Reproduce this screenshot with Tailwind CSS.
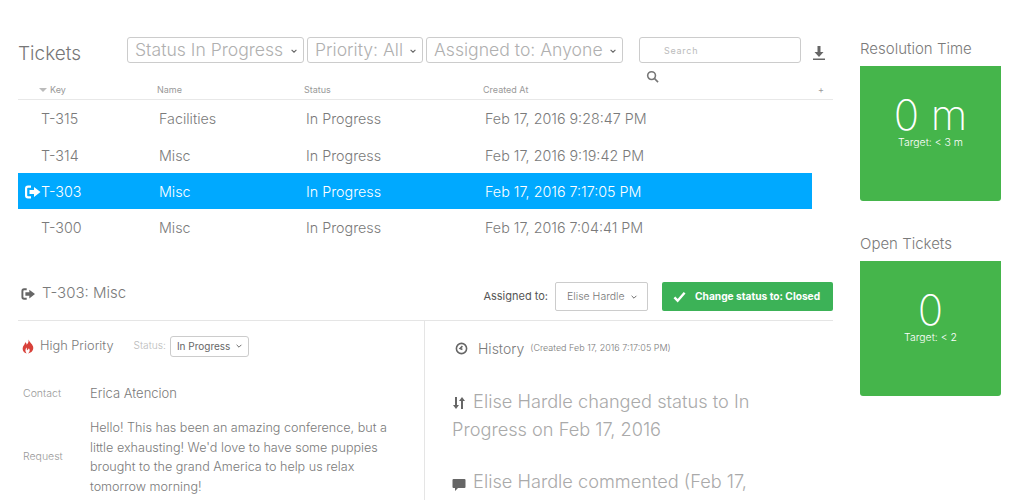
<!DOCTYPE html>
<html lang="en">
<head>
    <meta charset="UTF-8">
    <title>Tickets</title>
    <script src="https://cdn.jsdelivr.net/npm/@tailwindcss/browser@4"></script>
</head>
<body class="bg-white h-[500px] overflow-hidden font-['Inter',sans-serif] font-light text-[#7a7a7a]">
    <div class="flex items-start pl-[18px]">
        <!-- main column -->
        <div class="w-[815px] shrink-0">
            <div class="flex items-start h-[76px] pt-[37px]">
                <h1 class="w-[109px] text-[19px] leading-[32px] mt-[1px] font-light text-[#777]">Tickets</h1>
                <div class="flex gap-[3px]">
                    <div class="flex items-center justify-between w-[177px] h-[26px] pl-[7px] pr-[5px] pt-[1px] border border-[#ccc] rounded-[3px] text-[17.600px] text-[#b0b0b0] whitespace-nowrap">Status In Progress <svg class="w-[8px] h-[8px]" viewBox="0 0 10 10" fill="none" stroke="#666" stroke-width="1.400"><path d="M2 3.500l3 3 3-3"/></svg></div>
                    <div class="flex items-center justify-between w-[116px] h-[26px] pl-[7px] pr-[5px] pt-[1px] border border-[#ccc] rounded-[3px] text-[17.600px] text-[#b0b0b0] whitespace-nowrap">Priority: All <svg class="w-[8px] h-[8px]" viewBox="0 0 10 10" fill="none" stroke="#666" stroke-width="1.400"><path d="M2 3.500l3 3 3-3"/></svg></div>
                    <div class="flex items-center justify-between w-[197px] h-[26px] pl-[7px] pr-[5px] pt-[1px] border border-[#ccc] rounded-[3px] text-[17.600px] text-[#b0b0b0] whitespace-nowrap">Assigned to: Anyone <svg class="w-[8px] h-[8px]" viewBox="0 0 10 10" fill="none" stroke="#666" stroke-width="1.400"><path d="M2 3.500l3 3 3-3"/></svg></div>
                </div>
                <div class="relative ml-[16px] w-[162px] h-[26px] border border-[#ccc] rounded-[3px] pl-[24px] text-[9px] leading-[26px] tracking-[0.08em] font-normal text-[#bbb]">
                    Search
                    <svg class="absolute left-[6px] top-[32px] w-[13px] h-[13px]" viewBox="0 0 14 14" fill="none" stroke="#777" stroke-width="1.700"><circle cx="6" cy="6" r="4.200"/><path d="M9 9l4 4"/></svg>
                </div>
                <svg class="ml-[11px] mt-[8px] w-[14px] h-[16px]" viewBox="0 0 14 16" fill="#666"><path d="M5.500 1h3v6h3L7 12 2.500 7h3z"/><rect x="1" y="13.500" width="12" height="1.500"/></svg>
            </div>
            <div class="flex items-center h-[24px] pt-[5px] border-b border-[#e8e8e8] text-[9px] font-normal text-[#999]">
                <div class="w-[139px] pl-[21px] flex items-center gap-[3px]"><span class="w-0 h-0 border-x-[4px] border-x-transparent border-t-[4px] border-t-[#bbb]"></span><span>Key</span></div>
                <div class="w-[147px]">Name</div>
                <div class="w-[179px]">Status</div>
                <div class="w-[335px]">Created At</div>
                <div>+</div>
            </div>
            <div class="w-[794px] text-[14.300px]">
                <div class="flex items-center h-[37px]"><div class="w-[141px] pl-[23px]">T-315</div><div class="w-[147px]">Facilities</div><div class="w-[179px]">In Progress</div><div>Feb 17, 2016 9:28:47 PM</div></div>
                <div class="flex items-center h-[36px] pt-[1px]"><div class="w-[141px] pl-[23px]">T-314</div><div class="w-[147px]">Misc</div><div class="w-[179px]">In Progress</div><div>Feb 17, 2016 9:19:42 PM</div></div>
                <div class="flex items-center h-[36px] pt-[1px] bg-[#00a9ff] text-white"><div class="w-[141px] pl-[6px] flex items-center"><svg class="w-[17px] h-[14px]" viewBox="0 0 16 14" fill="white"><path d="M6.500 .5H3.500A3 3 0 0 0 .5 3.500v7a3 3 0 0 0 3 3h3v-2.200h-3a.8.8 0 0 1-.8-.8v-7a.8.8 0 0 1 .8-.8h3z"/><path d="M9.500 2L16 7l-6.500 5V9H5V5h4.500z"/></svg><span>T-303</span></div><div class="w-[147px]">Misc</div><div class="w-[179px]">In Progress</div><div>Feb 17, 2016 7:17:05 PM</div></div>
                <div class="flex items-center h-[37px]"><div class="w-[141px] pl-[23px]">T-300</div><div class="w-[147px]">Misc</div><div class="w-[179px]">In Progress</div><div>Feb 17, 2016 7:04:41 PM</div></div>
            </div>
            <!-- ticket detail -->
            <div class="flex items-center justify-between h-[66px] pt-[18px] border-b border-[#e5e5e5] mt-[9px]">
                <div class="flex items-center gap-[7px] pl-[3px] mb-[6px] text-[15px]">
                    <svg class="w-[14px] h-[14px]" viewBox="0 0 16 14" fill="#666"><path d="M6.500 .5H3.500A3 3 0 0 0 .5 3.500v7a3 3 0 0 0 3 3h3v-2.200h-3a.8.8 0 0 1-.8-.8v-7a.8.8 0 0 1 .8-.8h3z"/><path d="M9.500 2L16 7l-6.500 5V9H5V5h4.500z"/></svg>
                    <span>T-303: Misc</span>
                </div>
                <div class="flex items-center">
                    <span class="text-[11px] font-normal text-[#555]">Assigned to:</span>
                    <div class="flex items-center justify-between ml-[7px] w-[93px] h-[29px] pl-[11px] pr-[9px] border border-[#ccc] rounded-[2px] text-[10.500px] text-[#777] whitespace-nowrap">Elise Hardle <svg class="w-[8px] h-[8px]" viewBox="0 0 10 10" fill="none" stroke="#666" stroke-width="1.200"><path d="M2 3.500l3 3 3-3"/></svg></div>
                    <div class="flex items-center ml-[14px] w-[171px] h-[29px] pl-[11px] gap-[9px] rounded-[2px] bg-[#3cb257] text-white text-[10.200px] font-bold whitespace-nowrap"><svg class="w-[13px] h-[12px]" viewBox="0 0 14 12" fill="none" stroke="white" stroke-width="2.600"><path d="M1.500 6.500l3.500 3.500 7.500-8.500"/></svg>Change status to: Closed</div>
                </div>
            </div>
            <div class="flex">
                <div class="w-[407px] shrink-0 border-r border-[#e5e5e5] h-[200px]">
                    <div class="flex items-center h-[49px] pt-[1px] pl-[4px]">
                        <svg class="w-[12px] h-[15px]" viewBox="0 0 13 15" fill="#d8413a"><path d="M7 0c1 3 4 4.500 5 7.500 1 3.500-1.500 7-5.500 7.500 2-1.500 2.500-3.500 1-5.500-.5 1-1 1.500-2 2-.5-1 0-2-.5-3C3.500 10 3 12.500 5 15 2 14.500 .5 12 .7 9.500 1 6.500 3 6 3.500 3c1 .5 1.500 1.500 1.500 2.500C6.500 4.500 7.500 2.500 7 0z"/></svg>
                        <span class="ml-[6px] text-[12.800px]">High Priority</span>
                        <span class="ml-[20px] text-[10.200px] text-[#bbb]">Status:</span>
                        <div class="flex items-center justify-between ml-[4px] w-[79px] h-[21px] pl-[6px] pr-[5px] border border-[#ccc] rounded-[3px] text-[10px] font-normal text-[#666] whitespace-nowrap">In Progress <svg class="w-[8px] h-[8px]" viewBox="0 0 10 10" fill="none" stroke="#666" stroke-width="1.200"><path d="M2 3.500l3 3 3-3"/></svg></div>
                    </div>
                    <div class="flex items-center h-[24px] mt-[12px]"><div class="w-[72px] pl-[5px] text-[10.500px] text-[#999]">Contact</div><div class="text-[13px]">Erica Atencion</div></div>
                    <div class="flex items-center mt-[12px]"><div class="w-[72px] shrink-0 pl-[5px] text-[10.500px] text-[#999]">Request</div><div class="w-[310px] text-[12.600px] leading-[19.600px]">Hello! This has been an amazing conference, but a little exhausting! We'd love to have some puppies brought to the grand America to help us relax tomorrow morning!</div></div>
                </div>
                <div class="flex-1 pl-[27px]">
                    <div class="flex items-center h-[54px] pl-[3px]">
                        <svg class="w-[13px] h-[13px]" viewBox="0 0 14 14" fill="none" stroke="#666" stroke-width="1.700"><circle cx="7" cy="7" r="5.500"/><path d="M8 4.500L5.500 7 8 8"/></svg>
                        <span class="ml-[10px] text-[14px]">History</span>
                        <span class="ml-[6px] text-[9px]">(Created Feb 17, 2016 7:17:05 PM)</span>
                    </div>
                    <div class="w-[340px] mt-[13px] text-[18.200px] leading-[27.500px] text-[#aaa]">
                        <svg class="inline w-[14px] h-[14px] mr-[2px] align-[-2px]" viewBox="0 0 14 14" fill="#666"><path d="M3 1h2v8h2l-3 4-3-4h2zM9 13h2V5h2l-3-4-3 4h2z"/></svg>
                        Elise Hardle changed status to In Progress on Feb 17, 2016
                    </div>
                    <div class="w-[340px] mt-[25px] text-[18.200px] leading-[27.500px] text-[#aaa]">
                        <svg class="inline w-[14px] h-[14px] mr-[2px] align-[-3px]" viewBox="0 0 14 14" fill="#666"><path d="M1.500 2h11a1 1 0 0 1 1 1v7a1 1 0 0 1-1 1H6l-3 3v-3H1.500a1 1 0 0 1-1-1V3a1 1 0 0 1 1-1z"/></svg>
                        Elise Hardle commented (Feb 17,
                    </div>
                </div>
            </div>
        </div>
        <!-- metrics -->
        <div class="ml-[27px] w-[141px] shrink-0 pt-[39px]">
            <div class="text-[15px] leading-[20px] mb-[7px]">Resolution Time</div>
            <div class="h-[135px] bg-[#45b54b] rounded-b-[3px] text-white text-center pt-[27px]">
                <div class="text-[42px] leading-[43px] font-extralight">0 m</div>
                <div class="text-[10.500px] leading-[14px]">Target: &lt; 3 m</div>
            </div>
            <div class="mt-[33px] text-[15px] leading-[20px] mb-[7px]">Open Tickets</div>
            <div class="h-[135px] bg-[#45b54b] rounded-b-[3px] text-white text-center pt-[27px]">
                <div class="text-[42px] leading-[43px] font-extralight">0</div>
                <div class="text-[10.500px] leading-[14px]">Target: &lt; 2</div>
            </div>
        </div>
    </div>
</body>
</html>
